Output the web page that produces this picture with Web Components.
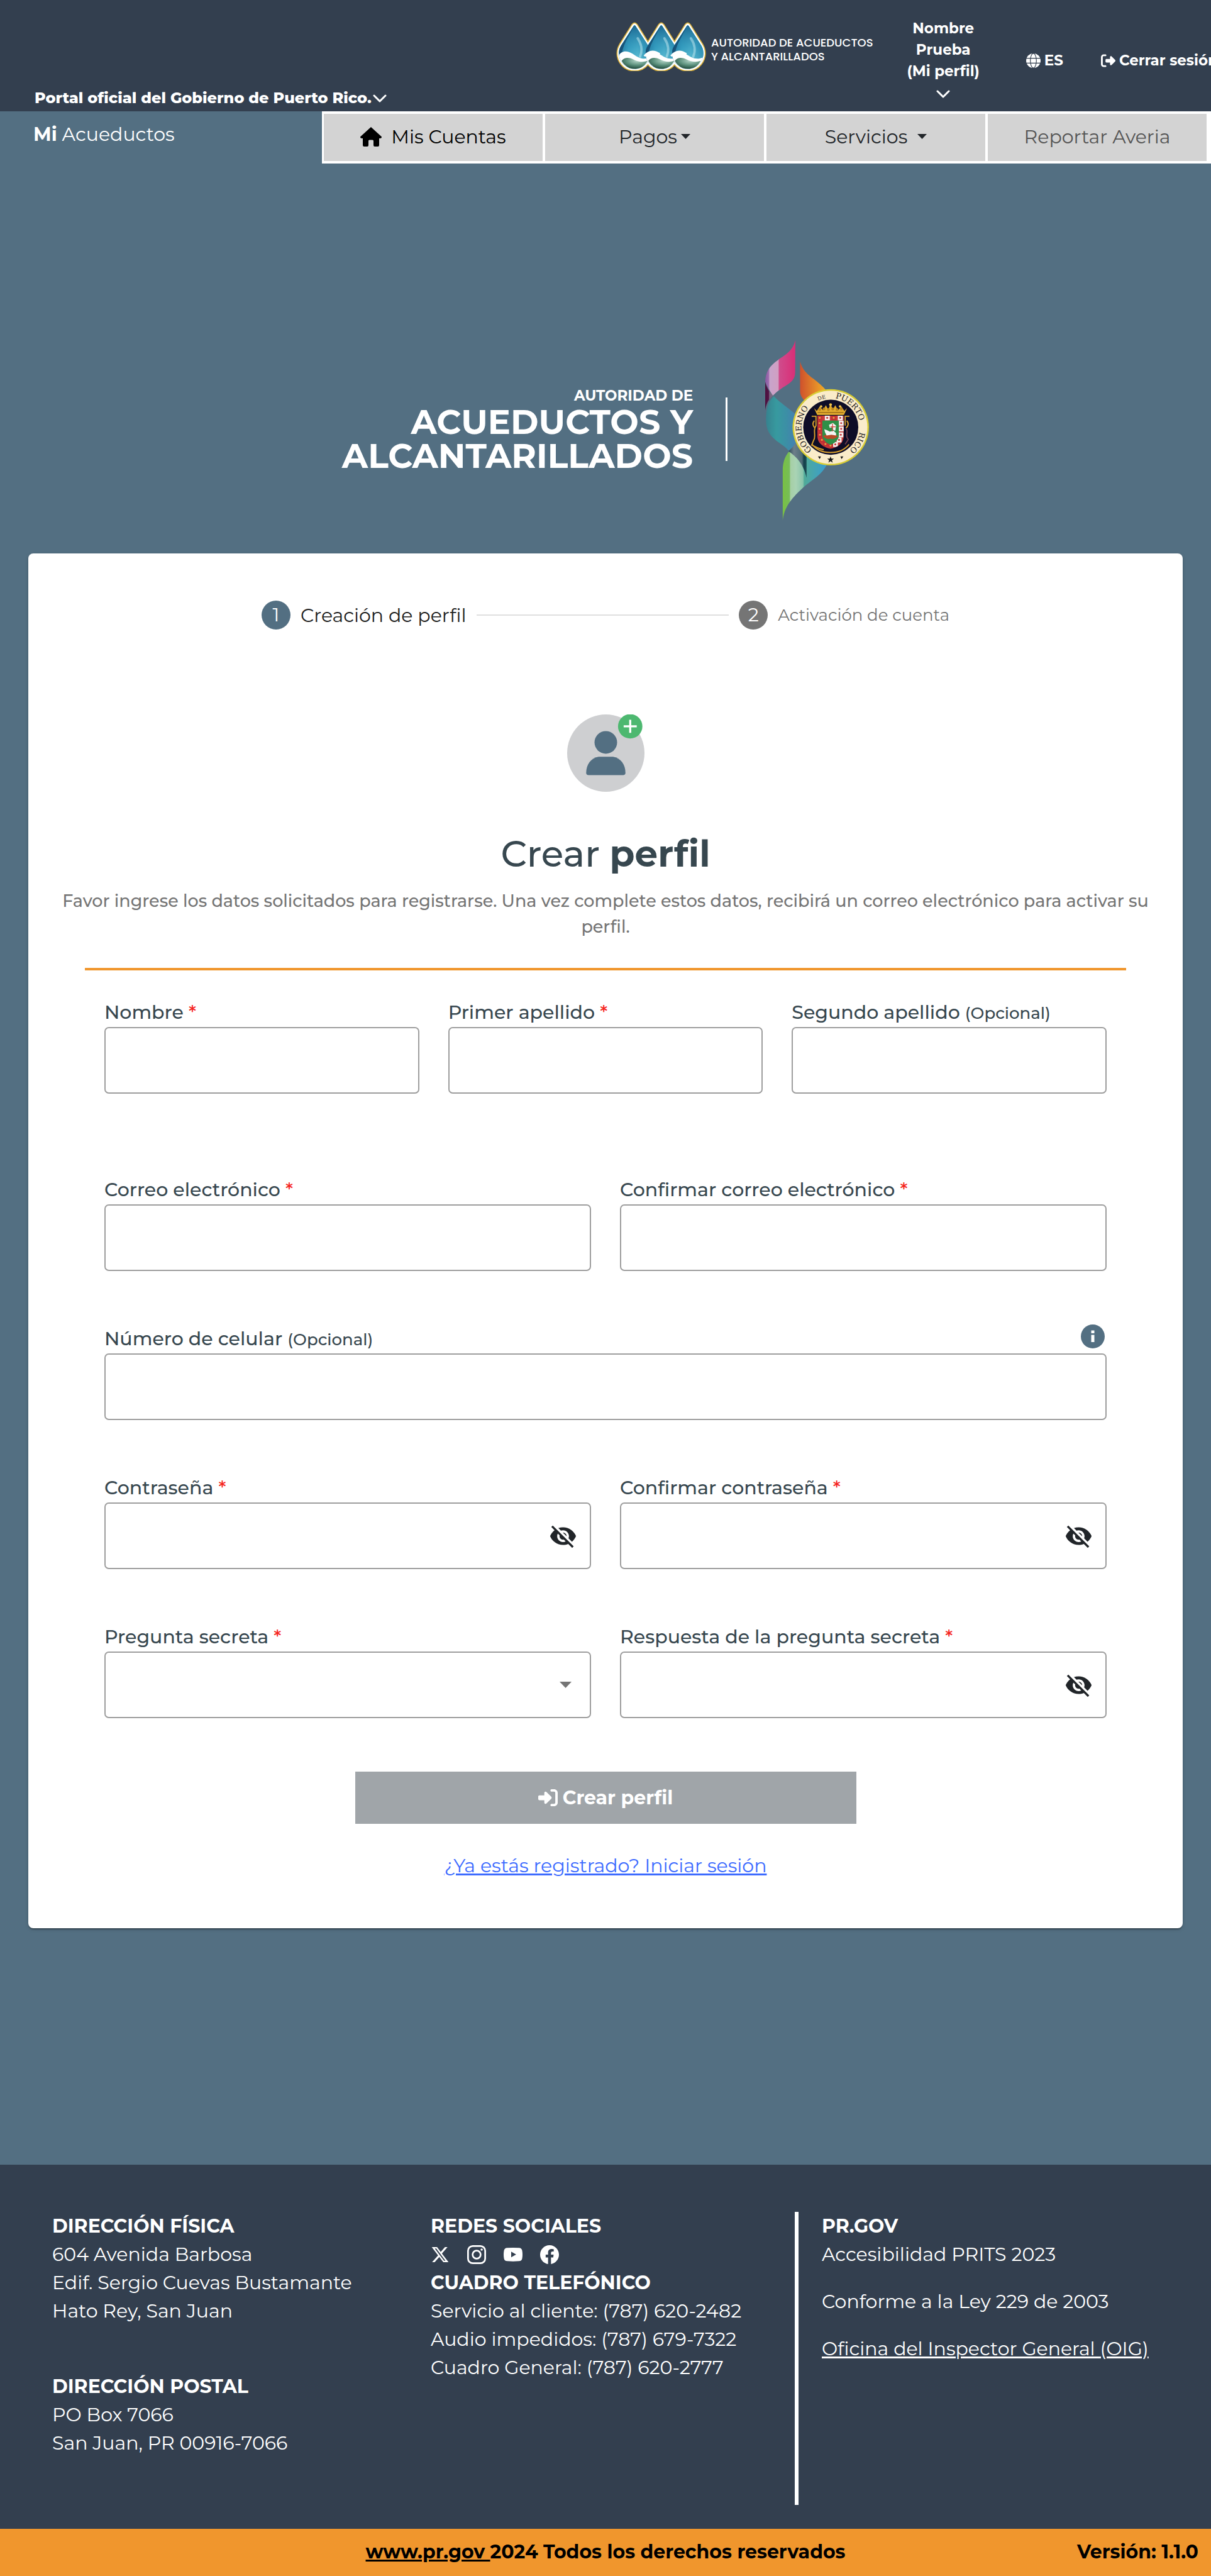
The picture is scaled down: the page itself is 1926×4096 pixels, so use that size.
<!DOCTYPE html>
<html lang="es">
<head>
<meta charset="utf-8">
<title>Mi Acueductos - Crear perfil</title>
<style>
html{background:#536f82}
body{margin:0;font-family:"Montserrat","Inter",sans-serif;font-size:30px;line-height:45px;color:#212529;overflow-x:hidden}
</style>
</head>
<body>
<mi-app></mi-app>
<script>
const define = (name, html, setup) => {
  const t = document.createElement('template');
  t.innerHTML = `<style>*{box-sizing:border-box}a{color:inherit}button,input,select{font:inherit;color:inherit;background:none;border:0;margin:0;padding:0}svg{display:block;flex:none}p,h1,h2{margin:0;font-size:inherit}</style>` + html;
  customElements.define(name, class extends HTMLElement {
    constructor() {
      super();
      this.attachShadow({mode: 'open'}).append(t.content.cloneNode(true));
    }
    connectedCallback() { if (setup) setup(this, this.shadowRoot); }
  });
};

const chevron = `<svg class="chev" width="22" height="13" viewBox="0 0 22 13" fill="none" stroke="#fff" stroke-width="3" stroke-linecap="round" stroke-linejoin="round"><path d="M2 2l9 9 9-9"/></svg>`;

/* ---------- drawings ---------- */
const outer = 'M119 66Q130 52 141 66L205 168A87 87 0 1 1 55 168Z';
const inner = 'M125 72Q130 66 135 72L199 171A80 80 0 1 1 61 171Z';
define('drops-logo', `
<style>:host{display:block}</style>
<svg width="144" height="78" viewBox="38 52 458 250" aria-hidden="true">
<defs>
<linearGradient id="b" x1="0" x2="1"><stop offset="0" stop-color="#155a86"/><stop offset=".3" stop-color="#3aa6c6"/><stop offset=".6" stop-color="#57bdd4"/><stop offset="1" stop-color="#2487ac"/></linearGradient>
<linearGradient id="t" x1="0" x2="0" y1="0" y2="1"><stop offset="0" stop-color="#1b6690"/><stop offset=".5" stop-color="#2b8fb6" stop-opacity=".5"/><stop offset="1" stop-color="#7fd0dd" stop-opacity=".3"/></linearGradient>
<radialGradient id="g" cx=".6" cy=".25" r=".75"><stop offset="0" stop-color="#b5d6c9"/><stop offset=".55" stop-color="#5c917d"/><stop offset="1" stop-color="#1f4a3c"/></radialGradient>
<clipPath id="c"><path d="${inner}"/></clipPath>
<g id="o"><path d="${outer}"/><path d="${outer}" transform="translate(136)"/><path d="${outer}" transform="translate(271)"/></g>
<g id="d">
<path d="${inner}" fill="url(#b)"/><path d="${inner}" fill="url(#t)"/>
<path d="M146 135C166 165 172 195 158 228" fill="none" stroke="#c8ebf2" stroke-width="12" stroke-linecap="round" opacity=".5"/>
<path d="M64 170L126 74C100 130 66 170 62 236C44 212 50 188 64 170Z" fill="#0c3358" opacity=".6"/>
<g clip-path="url(#c)"><path d="M48 226C62 196 92 196 120 214C150 236 176 248 214 230V310H40Z" fill="#fff"/></g>
<path d="M64 250C80 230 100 232 122 242C150 256 172 258 196 250C180 280 158 291 130 291C102 291 78 276 64 250Z" fill="url(#g)"/>
</g>
</defs>
<use href="#o" stroke="#dcb33c" stroke-width="10" fill="#dcb33c" stroke-linejoin="round"/>
<use href="#o" fill="#fff"/>
<use href="#d"/><use href="#d" x="136"/><use href="#d" x="271"/>
<path d="M180 226C210 190 240 204 258 216M316 226C346 190 376 204 394 216" fill="none" stroke="#fff" stroke-width="10"/>
</svg>`);

const merlons = [0,1,2,3,4,5].map(i => `<circle cx="${345+i*22}" cy="${368-(i%2)*3}" r="7"/>`).join('');
let checks = '';
[[345,410],[383,410],[416,410],[449,410],[344,437],[454,437],[344,466],[454,466],[346,496],[452,496],[356,522],[443,522],[374,543],[424,545],[400,551]].forEach(([x,y],i) => {
  checks += `<rect x="${x-12}" y="${y-12}" width="25" height="25" fill="${i%2?'#f6eeee':'#c32f33'}"/><circle cx="${x}" cy="${y}" r="5" fill="${i%2?'#c5383a':'#e3a43c'}"/>`;
});
define('pr-seal', `
<style>:host{display:block}</style>
<svg width="165" height="293" viewBox="68 0 527 936" role="img" aria-label="Sello">
<defs>
<linearGradient id="p" gradientUnits="userSpaceOnUse" x1="68" x2="220" y1="0" y2="0"><stop offset="0" stop-color="#8659a2"/><stop offset=".13" stop-color="#a26fb0"/><stop offset=".14" stop-color="#c8a4cb"/><stop offset=".44" stop-color="#d19fc2"/><stop offset=".46" stop-color="#cf4c8c"/><stop offset="1" stop-color="#da2e77"/></linearGradient>
<linearGradient id="m" gradientUnits="userSpaceOnUse" x1="68" x2="110" y1="0" y2="0"><stop offset="0" stop-color="#4b0d3c"/><stop offset=".45" stop-color="#541548"/><stop offset=".5" stop-color="#77607c"/><stop offset="1" stop-color="#7f7189"/></linearGradient>
<linearGradient id="r" gradientUnits="userSpaceOnUse" x1="245" x2="370" y1="0" y2="0"><stop offset="0" stop-color="#cf512c"/><stop offset="1" stop-color="#f0aa27"/></linearGradient>
<linearGradient id="t" gradientUnits="userSpaceOnUse" x1="72" x2="225" y1="0" y2="0"><stop offset="0" stop-color="#36828f"/><stop offset=".35" stop-color="#379a9f"/><stop offset=".7" stop-color="#3c8ea6"/><stop offset="1" stop-color="#467fb2"/></linearGradient>
<linearGradient id="g" gradientUnits="userSpaceOnUse" x1="157" x2="380" y1="0" y2="0"><stop offset="0" stop-color="#78c043"/><stop offset=".15" stop-color="#77bd57"/><stop offset=".18" stop-color="#a6cfa5"/><stop offset=".3" stop-color="#a9d3b4"/><stop offset=".46" stop-color="#8ac4ab"/><stop offset=".49" stop-color="#50aa98"/><stop offset="1" stop-color="#389dd0"/></linearGradient>
<linearGradient id="k" gradientUnits="userSpaceOnUse" x1="187" x2="278" y1="0" y2="0"><stop offset="0" stop-color="#2d4b58"/><stop offset=".3" stop-color="#6d7f8a"/><stop offset=".75" stop-color="#4d6a75"/><stop offset=".85" stop-color="#15414b"/><stop offset="1" stop-color="#1a4a52"/></linearGradient>
<path id="ring" d="M401 607A149 149 0 0 1 401 309A149 149 0 0 1 401 607"/>
<clipPath id="sh"><path d="M333 399H467V500C467 545 430 560 400 568C370 560 333 545 333 500Z"/></clipPath>
</defs>
<path fill="url(#p)" d="M221 16C207 76 160 95 132 117C95 142 68 175 68 228C80 256 95 280 107 297C140 265 160 255 180 242C210 222 220 205 220 178Z"/>
<path fill="url(#m)" d="M68 228V372C72 340 85 315 107 297C90 280 75 258 68 228Z"/>
<path fill="url(#r)" d="M245 123C260 180 300 200 330 225C360 250 370 260 380 275L270 325C250 305 245 290 245 270Z"/>
<path fill="url(#t)" d="M112 300C150 340 190 360 230 400V540L187 577C150 530 72 520 72 420C72 360 85 325 112 300Z"/>
<path fill="url(#g)" d="M187 583C165 612 157 640 157 680V932C165 870 190 830 260 765C310 720 350 705 380 650L280 590Z"/>
<path fill="url(#k)" d="M187 580C205 565 215 550 225 535L278 590V715C265 650 230 610 187 580Z"/>
<circle cx="401" cy="458" r="194" fill="#d9cd35"/>
<circle cx="401" cy="458" r="186" fill="#faecca"/>
<circle cx="401" cy="458" r="140" fill="#0e0d27"/>
<g font-family="'DejaVu Serif',serif" font-size="40" font-weight="400" fill="#1c1b22" text-anchor="middle">
<text><textPath href="#ring" startOffset="222">GOBIERNO</textPath></text>
<text font-size="26"><textPath href="#ring" startOffset="423">DE</textPath></text>
<text><textPath href="#ring" startOffset="580">PUERTO</textPath></text>
<text><textPath href="#ring" startOffset="780">RICO</textPath></text>
</g>
<path d="M400 605l4 12h13l-10 8 4 13-11-8-11 8 4-13-10-8h13zM336 606h15l-6 14zM450 606h15l-9 14z" fill="#161616"/>
<g fill="none" stroke="#d9a02c" stroke-width="6"><path d="M304 402H326V450C310 470 324 490 318 515L304 548C330 560 345 570 365 572M496 402H474V450"/><path d="M318 425C304 438 312 455 322 462M482 425C496 438 488 455 478 462"/><path d="M306 545C350 600 450 600 494 545"/></g>
<path d="M478 465C494 480 470 500 490 520L474 545" fill="none" stroke="#6a3a4a" stroke-width="6"/>
<path d="M316 360L330 375L345 352L362 372L376 346L388 368L400 340L412 368L424 346L438 372L455 352L470 375L484 360L468 395H332Z" fill="#e3ac2d"/>
<g fill="#b9851e">${merlons}</g><g fill="#f1c64a"><circle cx="400" cy="343" r="7"/><circle cx="352" cy="352" r="6"/><circle cx="448" cy="352" r="6"/></g>
<path d="M334 383H466" stroke="#8d5f14" stroke-width="4"/>
<g clip-path="url(#sh)"><rect x="330" y="395" width="140" height="180" fill="#c83b3a"/>${checks}</g>
<path d="M358 424H442V500C442 522 420 540 400 547C380 540 358 522 358 500Z" fill="#2f8f47"/>
<path d="M362 502Q400 482 438 502Q420 522 400 516Q378 522 362 502Z" fill="#b84a26"/>
<path d="M368 468L380 472L396 480L416 476L428 488V500L404 496L380 500L372 484ZM392 446L412 436L428 450L424 476L414 472L410 458L396 462Z" fill="#f4f4f2"/>
<path d="M410 440V478M400 456H426" stroke="#d5433d" stroke-width="4"/>
</svg>`);

/* ---------- header ---------- */
define('site-header', `
<style>
:host{display:flex;height:177px;background:#333f4f;color:#fff;font-weight:700;font-size:23px;line-height:34px;overflow:hidden}
.left{flex:1 1 0;padding:0 0 2px 55px;display:flex;align-items:flex-end}
.portal{display:flex;align-items:center;gap:2px;font-size:24px;font-weight:800;line-height:38px;white-space:nowrap}
.right{flex:0 0 946px;min-width:0;display:flex;white-space:nowrap}
.right>*{flex:none}
.brand{display:flex;padding:35px 54px 0 0;gap:7px}
.brand p{padding-top:22px;font:500 18px/22px "Poppins","Inter",sans-serif}
.user{margin-top:28px;height:136px;text-align:center;line-height:34px;display:block}
.user .chev{margin:13px auto 8px}
.item{display:flex;align-items:center;gap:6px;align-self:flex-start;margin-top:79px;text-decoration:none}
.es{margin-left:74px;margin-right:60px}
</style>
<div class="left"><button class="portal">Portal oficial del Gobierno de Puerto Rico.${chevron}</button></div>
<div class="right">
<div class="brand"><drops-logo></drops-logo><p>AUTORIDAD DE ACUEDUCTOS<br>Y ALCANTARILLADOS</p></div>
<button class="user">Nombre<br>Prueba<br>(Mi perfil)${chevron}</button>
<button class="item es"><svg width="23" height="23" viewBox="0 0 24 24"><circle cx="12" cy="12" r="12" fill="#fff"/><g fill="none" stroke="#333f4f" stroke-width="1.2"><ellipse cx="12" cy="12" rx="5" ry="12"/><path d="M0 8H24M0 16H24"/></g></svg>ES</button>
<a class="item" href="#"><svg width="23" height="23" viewBox="0 0 512 512" fill="#fff"><path d="M377.9 105.9L500.7 228.7c7.2 7.2 11.3 17.1 11.3 27.3s-4.1 20.1-11.3 27.3L377.9 406.1c-6.4 6.4-15 9.9-24 9.9c-18.7 0-33.9-15.2-33.9-33.9l0-62.1-128 0c-17.7 0-32-14.3-32-32l0-64c0-17.7 14.3-32 32-32l128 0 0-62.1c0-18.7 15.2-33.9 33.9-33.9c9 0 17.6 3.6 24 9.9zM160 96L96 96c-17.7 0-32 14.3-32 32l0 256c0 17.7 14.3 32 32 32l64 0c17.7 0 32 14.3 32 32s-14.3 32-32 32l-64 0c-53 0-96-43-96-96L0 128C0 75 43 32 96 32l64 0c17.7 0 32 14.3 32 32s-14.3 32-32 32z"/></svg>Cerrar sesión</a>
</div>`);

const caret = `<svg width="15" height="8" viewBox="0 0 15 8"><path d="M0 0h15L7.500 8z" fill="#212529"/></svg>`;
define('main-nav', `
<style>
:host{display:flex;height:83px}
.title{flex:1 1 0;padding:14px 0 0 53px;color:#fff}
nav{flex:0 0 1414px;display:grid;grid-template-columns:repeat(4,1fr);gap:4px;background:#fff;padding:4px 7px 4px 3px}
nav>*{background:#d3d3d3;display:flex;align-items:center;justify-content:center;padding-bottom:3px;text-decoration:none}
.home{color:#000;gap:15px}.pagos{gap:6px}.serv{gap:16px}.rep{color:#555}
</style>
<div class="title"><b>Mi</b> Acueductos</div>
<nav>
<a class="home" href="#"><svg width="34" height="31" viewBox="0 0 34 31"><path d="M17 0L34 15.500Q34 18 31.500 18H30V29Q30 31 28 31H23Q21 31 21 29V22Q21 20.500 19.500 20.500H14.500Q13 20.500 13 22V29Q13 31 11 31H6Q4 31 4 29V18H2.500Q0 18 0 15.500Z"/></svg>Mis Cuentas</a>
<button class="pagos">Pagos${caret}</button>
<button class="serv">Servicios${caret}</button>
<a class="rep" href="#">Reportar Averia</a>
</nav>`);

define('agency-banner', `
<style>
:host{display:flex;justify-content:center;align-items:center;padding:276px 0 51px;color:#fff;font-weight:700}
.n{text-align:right;font-size:54px;line-height:54px;font-weight:700}
.n small{display:block;font-size:23px;line-height:30px}
.v{width:3px;height:101px;background:#fff;margin:0 60px 0 52px}
</style>
<div class="n"><small>AUTORIDAD DE</small>ACUEDUCTOS Y<br>ALCANTARILLADOS</div><div class="v"></div><pr-seal></pr-seal>`);

/* ---------- form parts ---------- */
define('step-item', `
<style>
:host{display:flex;align-items:center;gap:16px;font-size:26px;color:#757575}
:host([active]){font-size:30px;color:#212121}
.n{width:46px;height:46px;border-radius:50%;background:#757575;color:#fff;font-size:30px;line-height:46px;text-align:center}
:host([active]) .n{background:#536f82}
</style><span class="n"></span><span><slot></slot></span>`, (el, r) => { r.querySelector('.n').textContent = el.getAttribute('n'); });

const eye = `<button class="eye" type="button" aria-label="Mostrar"><svg width="45" height="45" viewBox="0 0 24 24" fill="#212529"><path d="M12 7c2.760 0 5 2.240 5 5 0 .65-.13 1.260-.36 1.830l2.920 2.920c1.510-1.260 2.700-2.890 3.430-4.750-1.730-4.390-6-7.500-11-7.500-1.400 0-2.740.25-3.980.7l2.160 2.160C10.740 7.130 11.350 7 12 7zM2 4.270l2.280 2.280.46.46C3.080 8.300 1.780 10.020 1 12c1.730 4.390 6 7.500 11 7.500 1.550 0 3.030-.3 4.380-.84l.42.42L19.730 22 21 20.730 3.270 3 2 4.270zM7.530 9.800l1.550 1.550c-.05.21-.08.43-.08.65 0 1.660 1.340 3 3 3 .22 0 .44-.03.65-.08l1.550 1.550c-.67.33-1.410.53-2.200.53-2.760 0-5-2.240-5-5 0-.79.2-1.530.53-2.200zm4.310-.78l3.150 3.150.02-.16c0-1.660-1.340-3-3-3l-.17.01z"/></svg></button>`;
define('form-field', `
<style>
:host{display:block;flex:1 1 0;min-width:0}
.top{display:flex;justify-content:space-between;height:46px}
label{font-weight:500;line-height:46px;color:#37474f}
i{font-style:normal;color:#f5221b}
label small{font-size:26px}
.box{display:flex;align-items:center;height:106px;border:2px solid #9e9e9e;border-radius:7px}
input,select{flex:1;min-width:0;height:100%;padding:0 20px;outline:0;appearance:none}
.eye{margin-right:20px}.arr{margin-right:29px}
.info{width:38px;height:38px;margin-right:3px}
</style>
<div class="top"><label for="f"><slot></slot></label></div><div class="box"></div>`, (el, r) => {
  const kind = el.getAttribute('kind') || 'text';
  const label = r.querySelector('label');
  if (el.hasAttribute('required')) label.insertAdjacentHTML('beforeend', ' <i>*</i>');
  if (el.hasAttribute('optional')) label.insertAdjacentHTML('beforeend', ' <small>(Opcional)</small>');
  if (el.hasAttribute('info')) r.querySelector('.top').insertAdjacentHTML('beforeend', `<button class="info" type="button" aria-label="Información"><svg width="38" height="38" viewBox="0 0 38 38"><circle cx="19" cy="19" r="19" fill="#536f82"/><path d="M16.500 9.500h5v4.500h-5zM16.500 16.500h5V28h-5z" fill="#fff"/></svg></button>`);
  r.querySelector('.box').innerHTML =
    kind === 'select' ? `<select id="f"></select><svg class="arr" width="19" height="10" viewBox="0 0 19 10"><path d="M0 0h19L9.500 10z" fill="#757575"/></svg>`
    : `<input id="f" type="${kind}">` + (kind === 'password' ? eye : '');
});

define('field-row', `<style>:host{display:flex;gap:46px;margin-bottom:85px}:host([tall]){margin-bottom:130px}</style><slot></slot>`);

define('profile-card', `
<style>
:host{display:block;margin:0 45px;padding:75px 0 77px;background:#fff;border-radius:8px;box-shadow:0 4px 2px -2px rgba(0,0,0,.2),0 2px 2px rgba(0,0,0,.14),0 2px 6px rgba(0,0,0,.12)}
.steps{display:flex;align-items:center;width:1094px;max-width:100%;margin:0 auto 135px}
.line{flex:1;height:2px;background:#e0e0e0;margin:0 16px}
.av{margin:0 auto 65px}
h1{font-size:58px;line-height:68px;font-weight:500;text-align:center;color:#37474f}
.lead{padding:0 50px;margin-top:20px;font-size:27px;line-height:41px;font-weight:500;text-align:center;color:#757575}
hr{border:0;height:4px;background:#f0962d;margin:45px 90px 44px}
form{display:block;padding:0 121px}
.submit{display:flex;align-items:center;justify-content:center;gap:8px;width:50%;height:83px;margin:0 auto;background:#a0a5a9;color:#fff;font-weight:700}
.login{text-align:center;margin-top:44px;color:#3d6bff}
</style>
<div class="steps"><step-item active n="1">Creación de perfil</step-item><div class="line"></div><step-item n="2">Activación de cuenta</step-item></div>
<svg class="av" width="123" height="123" viewBox="0 0 130 130" aria-hidden="true"><circle cx="65" cy="65" r="65" fill="#cecfd1"/><g fill="#536f82"><circle cx="65" cy="47" r="19"/><path d="M53 71H77C90 73 98 84 98 98Q98 102 94 102H36Q32 102 32 98C32 84 40 73 53 71Z"/></g><circle cx="106" cy="20" r="20.500" fill="#4db870"/><path d="M106 9V31M95 20H117" stroke="#fff" stroke-width="3.500"/></svg>
<h1>Crear <b>perfil</b></h1>
<p class="lead">Favor ingrese los datos solicitados para registrarse. Una vez complete estos datos, recibirá un correo electrónico para activar su perfil.</p>
<hr>
<form>
<field-row tall><form-field required>Nombre</form-field><form-field required>Primer apellido</form-field><form-field optional>Segundo apellido</form-field></field-row>
<field-row><form-field kind="email" required>Correo electrónico</form-field><form-field kind="email" required>Confirmar correo electrónico</form-field></field-row>
<field-row><form-field kind="tel" optional info>Número de celular</form-field></field-row>
<field-row><form-field kind="password" required>Contraseña</form-field><form-field kind="password" required>Confirmar contraseña</form-field></field-row>
<field-row><form-field kind="select" required>Pregunta secreta</form-field><form-field kind="password" required>Respuesta de la pregunta secreta</form-field></field-row>
<button class="submit" disabled><svg width="31" height="31" viewBox="0 0 512 512" fill="#fff"><path d="M217.900 105.900L340.700 228.700c7.200 7.200 11.300 17.100 11.300 27.300s-4.100 20.100-11.300 27.300L217.900 406.100c-6.400 6.400-15 9.900-24 9.900c-18.700 0-33.900-15.200-33.900-33.900l0-62.100L32 320c-17.700 0-32-14.300-32-32l0-64c0-17.700 14.300-32 32-32l128 0 0-62.100c0-18.700 15.200-33.900 33.900-33.900c9 0 17.600 3.600 24 9.900zM352 416l64 0c17.700 0 32-14.300 32-32l0-256c0-17.700-14.300-32-32-32l-64 0c-17.700 0-32-14.300-32-32s14.300-32 32-32l64 0c53 0 96 43 96 96l0 256c0 53-43 96-96 96l-64 0c-17.700 0-32-14.300-32-32s14.300-32 32-32z"/></svg>Crear perfil</button>
<p class="login"><a href="#">¿Ya estás registrado? Iniciar sesión</a></p>
</form>`);

/* ---------- footer ---------- */
define('site-footer', `
<style>
:host{display:block;margin-top:376px;background:#333f4f;color:#fff}
.cols{display:grid;grid-template-columns:602fr 579fr 662fr;padding:75px 0 38px 83px;height:579px}
h2{font-weight:700;line-height:45px}
.sp{margin-top:75px}
.soc{display:flex;align-items:center;gap:28px;height:45px}
.soc a{display:block}
.pr{border-left:6px solid #fff;padding-left:37px}
.pr p{margin-bottom:30px}
.bar{display:grid;grid-template-columns:1fr auto 1fr;height:76px;align-items:center;padding:0 20px 4px;background:#f0962d;color:#000;font-weight:700}
.bar span:last-child{justify-self:end}
</style>
<div class="cols">
<section><h2>DIRECCIÓN FÍSICA</h2><p>604 Avenida Barbosa</p><p>Edif. Sergio Cuevas Bustamante</p><p>Hato Rey, San Juan</p><h2 class="sp">DIRECCIÓN POSTAL</h2><p>PO Box 7066</p><p>San Juan, PR 00916-7066</p></section>
<section><h2>REDES SOCIALES</h2>
<div class="soc">
<a href="#" aria-label="X"><svg width="30" height="30" viewBox="0 0 18 18" fill="#fff"><path transform="translate(1 1)" d="M12.600.75h2.454l-5.360 6.142L16 15.250h-4.937l-3.867-5.070-4.425 5.070H.316l5.733-6.570L0 .75h5.063l3.495 4.633L12.601.75Zm-.86 13.028h1.360L4.323 2.145H2.865z"/></svg></a>
<a href="#" aria-label="Instagram"><svg width="30" height="30" viewBox="0 0 16 16" fill="none" stroke="#fff" stroke-width="1.450"><rect x=".73" y=".73" width="14.540" height="14.540" rx="4"/><circle cx="8" cy="8" r="3.400"/><circle cx="12.300" cy="3.700" r=".95" fill="#fff" stroke="none"/></svg></a>
<a href="#" aria-label="YouTube"><svg width="30" height="30" viewBox="0 0 16 16"><path fill="#fff" d="M3 2.300Q8 1.900 13 2.300Q15.300 2.400 15.700 4.500Q16.300 8 15.700 11.300Q15.300 13.400 13 13.500Q8 13.900 3 13.500Q.7 13.400.3 11.300Q-.3 8 .3 4.500Q.7 2.400 3 2.300Z"/><path fill="#333f4f" d="M6.400 5.500v4.800L10.600 7.900z"/></svg></a>
<a href="#" aria-label="Facebook"><svg width="30" height="30" viewBox="0 0 16 16" fill="#fff"><path d="M16 8.049c0-4.446-3.582-8.050-8-8.050C3.580 0-.002 3.603-.002 8.050c0 4.017 2.926 7.347 6.750 7.951v-5.625h-2.030V8.050H6.750V6.275c0-2.017 1.195-3.131 3.022-3.131.876 0 1.791.157 1.791.157v1.980h-1.009c-.993 0-1.303.621-1.303 1.258v1.510h2.218l-.354 2.326H9.250V16c3.824-.604 6.750-3.934 6.750-7.951"/></svg></a>
</div>
<h2>CUADRO TELEFÓNICO</h2><p>Servicio al cliente: (787) 620-2482</p><p>Audio impedidos: (787) 679-7322</p><p>Cuadro General: (787) 620-2777</p></section>
<section class="pr"><h2>PR.GOV</h2><p>Accesibilidad PRITS 2023</p><p>Conforme a la Ley 229 de 2003</p><p><a href="#">Oficina del Inspector General (OIG)</a></p></section>
</div>
<div class="bar"><span></span><span><a href="#">www.pr.gov </a>2024 Todos los derechos reservados</span><span>Versión: 1.1.0</span></div>`);

define('mi-app', `<style>:host{display:block}</style><site-header></site-header><main-nav></main-nav><agency-banner></agency-banner><profile-card></profile-card><site-footer></site-footer>`);
</script>
</body>
</html>
